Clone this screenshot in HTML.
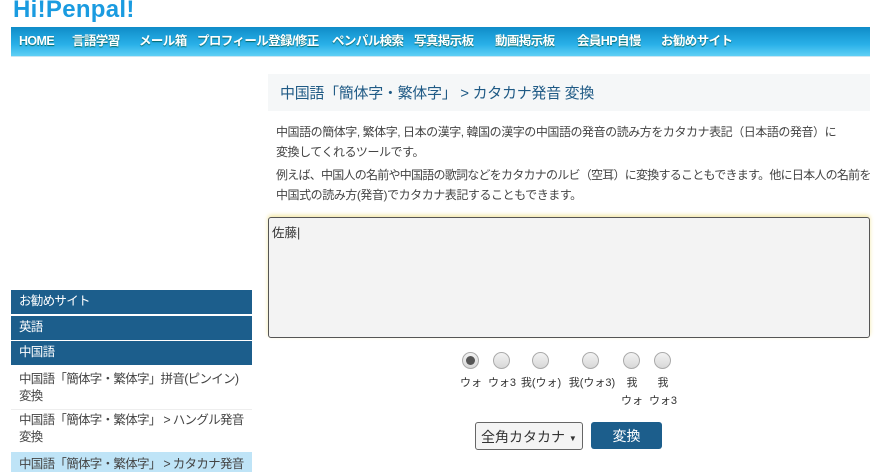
<!DOCTYPE html>
<html><head><meta charset="utf-8"><style>
*{box-sizing:border-box;margin:0;padding:0}
body{width:880px;height:469px;overflow:hidden;background:#fff;font-family:"Liberation Sans","Noto Sans CJK JP",sans-serif;color:#333;position:relative}
.logo{position:absolute;left:13px;top:-4px;font-size:24px;font-weight:bold;color:#1a9be0;letter-spacing:0.3px}
.nav{position:absolute;left:11px;top:27px;width:859px;height:30px;background:linear-gradient(#0f8cc8,#29b0e8 60%,#5fd0f5);border-bottom:1px solid #c9e6f2}
.nav span{position:absolute;top:6px;line-height:16px;color:#fff;font-size:12.5px;font-weight:bold;text-shadow:0 1px 1px #066;white-space:nowrap;letter-spacing:-0.6px}
.side{position:absolute;left:11px;width:241px;font-size:12.5px;padding-left:8px;line-height:17px;letter-spacing:-0.7px}
.dk{background:#1c5e8c;color:#fff;height:24px;padding-top:3px}
.title{position:absolute;left:268px;top:74px;width:602px;height:37px;background:#f5f7f8;font-size:15px;color:#1f5a85;padding:8px 0 0 12px;letter-spacing:-0.3px}
.p{position:absolute;left:276px;font-size:12px;color:#444;white-space:nowrap;letter-spacing:-0.45px}
.ta{position:absolute;left:268px;top:217px;width:602px;height:121px;border:1px solid #555;border-radius:3px;background:#f3f3f3;box-shadow:0 -2px 4px #f4e8a8;font-size:12.5px;padding:4px 3px}
.r{position:absolute;top:352px;width:17px;height:17px;border-radius:50%;border:1px solid #aaa;background:linear-gradient(#f2f2f2,#d8d8d8)}
.l{position:absolute;font-size:11px;color:#333;text-align:center;width:50px;line-height:18px}
</style></head><body>
<div class="logo">Hi!Penpal!</div>
<div class="nav">
<span style="left:8px">HOME</span><span style="left:61px">言語学習</span><span style="left:128px">メール箱</span><span style="left:186px">プロフィール登録/修正</span><span style="left:321px">ペンパル検索</span><span style="left:403px">写真掲示板</span><span style="left:484px">動画掲示板</span><span style="left:566px">会員HP自慢</span><span style="left:650px">お勧めサイト</span>
</div>
<div class="side dk" style="top:290px">お勧めサイト</div>
<div class="side dk" style="top:316px">英語</div>
<div class="side dk" style="top:341px">中国語</div>
<div class="side" style="top:371px;color:#444;border-bottom:1px solid #eee;height:39px">中国語「簡体字・繁体字」拼音(ピンイン) 変換</div>
<div class="side" style="top:412px;color:#444;height:40px">中国語「簡体字・繁体字」 &gt; ハングル発音 変換</div>
<div class="side" style="top:452px;height:20px;background:#bfe4f7;color:#444;padding-top:4px">中国語「簡体字・繁体字」 &gt; カタカナ発音</div>
<div class="title">中国語「簡体字・繁体字」 &gt; カタカナ発音 変換</div>
<div class="p" style="top:123px">中国語の簡体字, 繁体字, 日本の漢字, 韓国の漢字の中国語の発音の読み方をカタカナ表記（日本語の発音）に</div>
<div class="p" style="top:143px">変換してくれるツールです。</div>
<div class="p" style="top:166px;letter-spacing:-0.75px">例えば、中国人の名前や中国語の歌詞などをカタカナのルビ（空耳）に変換することもできます。他に日本人の名前を</div>
<div class="p" style="top:186px">中国式の読み方(発音)でカタカナ表記することもできます。</div>
<div class="ta">佐藤|</div>
<div class="r" style="left:462px"><div style="width:9px;height:9px;border-radius:50%;background:#555;margin:3px"></div></div>
<div class="r" style="left:493px"></div><div class="r" style="left:532px"></div><div class="r" style="left:582px"></div><div class="r" style="left:623px"></div><div class="r" style="left:654px"></div>
<div class="l" style="left:446px;top:374px">ウォ</div>
<div class="l" style="left:477px;top:374px">ウォ3</div>
<div class="l" style="left:516px;top:374px">我(ウォ)</div>
<div class="l" style="left:566px;top:374px;width:52px">我(ウォ3)</div>
<div class="l" style="left:607px;top:374px">我<br>ウォ</div>
<div class="l" style="left:638px;top:374px">我<br>ウォ3</div>
<div style="position:absolute;left:475px;top:422px;width:108px;height:28px;border:1px solid #666;border-radius:3px;background:#f4f4f4;font-size:14px;padding:4px 0 0 5px;color:#333">全角カタカナ <span style="font-size:8px;vertical-align:middle">▼</span></div>
<div style="position:absolute;left:591px;top:422px;width:71px;height:27px;background:#1c5e8c;border-radius:3px;color:#fff;font-size:14px;text-align:center;padding-top:4px">変換</div>
</body></html>
